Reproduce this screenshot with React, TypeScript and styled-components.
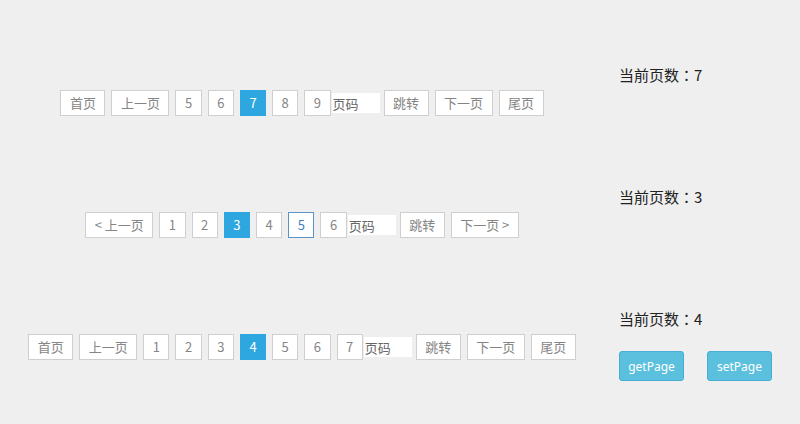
import React from 'react';
import styled, {createGlobalStyle} from "styled-components";

const GlobalStyle = createGlobalStyle`
  body {
    margin: 0;
    background: #efefef;
    font-family: "Noto Sans CJK SC", "Noto Sans", sans-serif;
  }
`;

type Item = {label: string, kind?: 'active' | 'hover'};

const App = () => {
  const first: Item[] = [{label: '首页'}, {label: '上一页'}, {label: '5'}, {label: '6'}, {label: '7', kind: 'active'}, {label: '8'}, {label: '9'}];
  const firstTail = ['跳转', '下一页', '尾页'];

  const second: Item[] = [{label: '< 上一页'}, {label: '1'}, {label: '2'}, {label: '3', kind: 'active'}, {label: '4'}, {label: '5', kind: 'hover'}, {label: '6'}];
  const secondTail = ['跳转', '下一页 >'];

  const third: Item[] = [{label: '首页'}, {label: '上一页'}, {label: '1'}, {label: '2'}, {label: '3'}, {label: '4', kind: 'active'}, {label: '5'}, {label: '6'}, {label: '7'}];
  const thirdTail = ['跳转', '下一页', '尾页'];

  const renderPager = (items: Item[], tail: string[]) => (
    <Pager>
      {items.map((item, index) => (
        <PageBtn key={index} $kind={item.kind}>{item.label}</PageBtn>
      ))}
      <PageInput placeholder="页码"/>
      {tail.map((label, index) => (
        <PageBtn key={label} $tight={index === 0}>{label}</PageBtn>
      ))}
    </Pager>
  );

  return (
    <>
      <GlobalStyle/>
      <Page>
        <Section>
          <Left>{renderPager(first, firstTail)}</Left>
          <Right><Current>当前页数：7</Current></Right>
        </Section>
        <Section>
          <Left>{renderPager(second, secondTail)}</Left>
          <Right><Current>当前页数：3</Current></Right>
        </Section>
        <Section>
          <Left>{renderPager(third, thirdTail)}</Left>
          <Right>
            <Current>当前页数：4</Current>
            <Actions>
              <ActionBtn>getPage</ActionBtn>
              <ActionBtn>setPage</ActionBtn>
            </Actions>
          </Right>
        </Section>
      </Page>
    </>
  );
};

export default App;

const Page = styled.div`
  width: 800px;
  height: 424px;
  overflow: hidden;
`;

const Section = styled.section`
  display: flex;
  height: 122px;
`;

const Left = styled.div`
  width: 604px;
  padding-top: 90px;
  display: flex;
  justify-content: center;
  align-items: flex-start;
`;

const Right = styled.div`
  padding-top: 65px;
  padding-left: 15px;
`;

const Pager = styled.div`
  display: flex;
  align-items: center;
`;

const PageBtn = styled.span<{$kind?: 'active' | 'hover', $tight?: boolean}>`
  box-sizing: border-box;
  height: 26px;
  line-height: 24px;
  padding: 0 8.5px;
  margin-left: ${p => p.$tight ? '4px' : '6px'};
  font-size: 13px;
  border: 1px solid ${p => p.$kind === 'active' ? '#2ea7e0' : p.$kind === 'hover' ? '#5b93c6' : '#cfcfcf'};
  background: ${p => p.$kind === 'active' ? '#2ea7e0' : '#ffffff'};
  color: ${p => p.$kind === 'active' ? '#ffffff' : p.$kind === 'hover' ? '#3f7fbf' : '#858585'};
  white-space: nowrap;

  &:first-child {
    margin-left: 0;
  }
`;

const PageInput = styled.input`
  box-sizing: border-box;
  width: 48px;
  height: 20px;
  margin-left: 1px;
  padding: 0 1px;
  border: none;
  outline: none;
  background: #ffffff;
  font-family: "Noto Sans CJK SC", sans-serif;
  font-size: 13px;

  &::placeholder {
    color: #666666;
  }
`;

const Current = styled.div`
  font-family: "Noto Sans CJK TC", "Noto Sans CJK SC", sans-serif;
  font-size: 15px;
  line-height: 20px;
  color: #222222;
`;

const Actions = styled.div`
  display: flex;
  gap: 23px;
  margin-top: 22px;
`;

const ActionBtn = styled.button`
  width: 65px;
  height: 30px;
  border: 1px solid #46aed2;
  border-radius: 3px;
  background: #5bc0de;
  color: #ffffff;
  font-family: "Noto Sans", sans-serif;
  font-size: 12px;
  padding: 0;
`;
